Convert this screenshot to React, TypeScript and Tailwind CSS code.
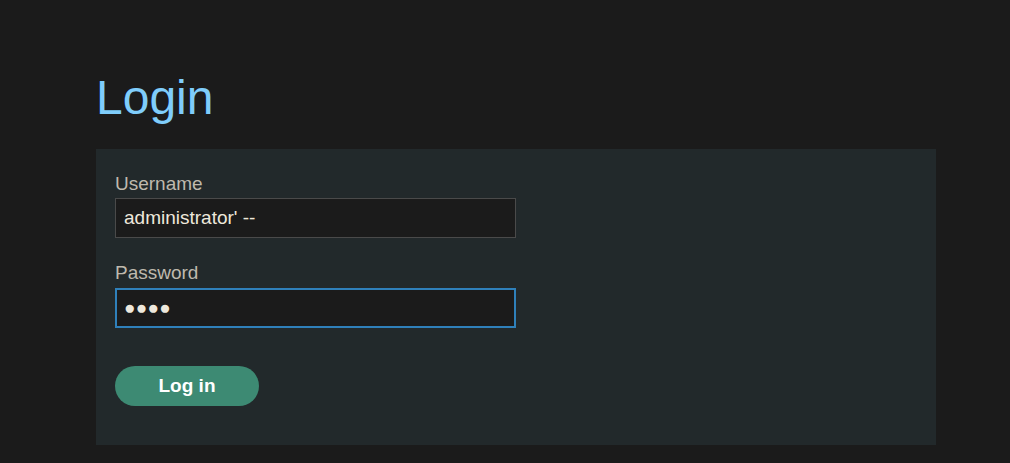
export default function App() {
  const labelClass = 'block text-[19px] leading-[22px] text-[#bfb9ae]'
  const inputClass =
    'block w-[401px] h-[40px] bg-[#1b1b1b] text-[19px] text-[#eee8dc] outline-none font-["Liberation_Sans",Arial,sans-serif]'

  return (
    <div className="min-h-[463px] w-full bg-[#1b1b1b] font-['Liberation_Sans',Arial,sans-serif]">
      <div className="pl-[96px] pt-[70px] w-[936px]">
        <h1 className="text-[48px] leading-[55px] text-[#7fcdfb] font-normal">Login</h1>

        <form
          className="mt-[24px] bg-[#22292b] px-[19px] pt-[24px] pb-[39px]"
          onSubmit={(e) => e.preventDefault()}
        >
          <label className={`${labelClass} mb-[3px]`}>Username</label>
          <input
            type="text"
            defaultValue="administrator' --"
            className={`${inputClass} border border-[#4a4a4a] px-[8px]`}
          />

          <label className={`${labelClass} mt-[24px] mb-[4px]`}>Password</label>
          {/* masked value drawn as black circles, like Firefox does */}
          <input
            type="text"
            readOnly
            aria-label="Password"
            value="●●●●"
            className={`${inputClass} border-2 border-[#2f80ba] px-[7px] tracking-[0.3px]`}
          />

          <button
            type="submit"
            className="mt-[38px] w-[144px] h-[40px] rounded-full bg-[#3d8a73] text-white text-[19px] font-bold"
          >
            Log in
          </button>
        </form>
      </div>
    </div>
  )
}
